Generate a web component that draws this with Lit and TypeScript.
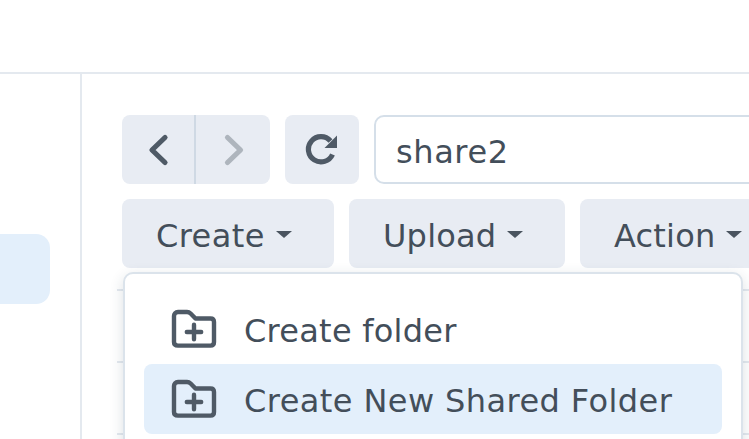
import { LitElement, html, css, svg } from "lit";
import { customElement } from "lit/decorators.js";

const folderPlus = svg`<svg class="ficon" width="46" height="40" viewBox="0 0 46 40" fill="none">
<path d="M3 7C3 4.8 4.5 3 7 3H16C17.5 3 18.6 3.5 19.6 4.5L24.5 9.5H39.5C41.7 9.5 43 10.8 43 13V33C43 35.2 41.7 36.6 39.5 36.6H7C4.5 36.6 3 35.2 3 33Z" stroke="#4f5a66" stroke-width="4.4" stroke-linejoin="round"/>
<path d="M23 15.8V30.2M15.8 23H30.2" stroke="#4f5a66" stroke-width="4.4" stroke-linecap="round"/></svg>`;

@customElement("app-root")
export class AppRoot extends LitElement {
  static styles = css`
    :host {
      display: block;
      width: 749px;
      height: 439px;
      overflow: hidden;
      background: #fff;
      font-family: "DejaVu Sans", sans-serif;
      color: #434e5a;
      font-size: 32px;
      letter-spacing: 0.42px;
    }
    .top { height: 72px; border-bottom: 2px solid #e4e9ef; }
    .body { display: flex; height: 365px; }
    .side {
      width: 80px;
      flex: none;
      border-right: 2px solid #e4e9ef;
      padding-top: 160px;
    }
    .side-item {
      width: 50px;
      height: 70px;
      background: #e3effb;
      border-radius: 0 14px 14px 0;
    }
    .main {
      flex: 1;
      min-width: 0;
      padding: 41px 0 0 40px;
      display: flex;
      flex-direction: column;
      gap: 15px;
      position: relative;
      overflow: hidden;
    }
    .row { display: flex; gap: 15px; height: 69px; flex: none; }
    .btn {
      background: #e8ecf3;
      border-radius: 8px;
      display: flex;
      align-items: center;
      flex: none;
      box-sizing: border-box;
    }
    .nav { width: 148px; display: flex; background: #e8ecf3; border-radius: 8px; flex: none; }
    .nav > div { display: flex; align-items: center; justify-content: center; }
    .nav .prev { width: 72px; border-right: 2px solid #cfd9e4; }
    .nav .next { flex: 1; }
    .refresh { width: 74px; justify-content: center; }
    .input {
      flex: none;
      width: 500px;
      box-sizing: border-box;
      border: 2px solid #d5dfe9;
      border-radius: 10px;
      display: flex;
      align-items: center;
      padding-left: 20px;
      letter-spacing: 0.6px;
    }
    .label { display: block; margin-top: 4px; white-space: nowrap; }
    .drop { gap: 11px; padding-left: 34px; letter-spacing: 0.2px; }
    .create { width: 212px; letter-spacing: 0.4px; }
    .upload { width: 216px; }
    .action { width: 212px; }
    .caret {
      width: 0;
      height: 0;
      border-left: 8px solid transparent;
      border-right: 8px solid transparent;
      border-top: 7px solid #4a545f;
      margin-top: 2px;
    }
    .table { flex: none; margin-top: 6px; margin-left: -5px; }
    .line { height: 2px; background: #e4e9ef; margin-bottom: 70px; }
    .menu {
      position: absolute;
      left: 41px;
      top: 198px;
      width: 620px;
      height: 240px;
      box-sizing: border-box;
      background: #fff;
      border: 2px solid #dbe3eb;
      border-radius: 10px;
      box-shadow: 0 4px 14px rgba(40, 60, 80, 0.16);
      padding: 20px 19px 0;
      display: flex;
      flex-direction: column;
    }
    .item {
      height: 70px;
      flex: none;
      border-radius: 8px;
      display: flex;
      align-items: center;
      gap: 27px;
      padding-left: 27px;
      white-space: nowrap;
    }
    .item.plain { letter-spacing: 0.25px; }
    .item.active { background: #e3effb; }
    .ficon { flex: none; }
  `;

  render() {
    return html`
      <div class="top"></div>
      <div class="body">
        <div class="side"><div class="side-item"></div></div>
        <div class="main">
          <div class="row">
            <div class="nav">
              <div class="prev">
                <svg width="24" height="34" viewBox="0 0 24 34" fill="none"><path d="M19 4.5L6 17L19 29.5" stroke="#4f5a66" stroke-width="5.2" stroke-linecap="round" stroke-linejoin="round"/></svg>
              </div>
              <div class="next">
                <svg width="24" height="34" viewBox="0 0 24 34" fill="none"><path d="M6.5 4.5L19.5 17L6.5 29.5" stroke="#aeb5bd" stroke-width="5.2" stroke-linecap="round" stroke-linejoin="round"/></svg>
              </div>
            </div>
            <div class="btn refresh">
              <svg width="34" height="34" viewBox="0 0 34 34" fill="none">
                <path d="M27.5 21.5A12.6 12.6 0 1 1 25.5 8" stroke="#4f5a66" stroke-width="5.2"/>
                <path d="M32 2.5V15H19.5Z" fill="#4f5a66"/>
              </svg>
            </div>
            <div class="input"><span class="label">share2</span></div>
          </div>
          <div class="row">
            <div class="btn drop create"><span class="label">Create</span><span class="caret"></span></div>
            <div class="btn drop upload"><span class="label">Upload</span><span class="caret"></span></div>
            <div class="btn drop action"><span class="label">Action</span><span class="caret"></span></div>
          </div>
          <div class="table">
            <div class="line"></div>
            <div class="line"></div>
            <div class="line"></div>
          </div>
          <div class="menu">
            <div class="item plain">${folderPlus}<span class="label">Create folder</span></div>
            <div class="item active">${folderPlus}<span class="label">Create New Shared Folder</span></div>
          </div>
        </div>
      </div>
    `;
  }
}
